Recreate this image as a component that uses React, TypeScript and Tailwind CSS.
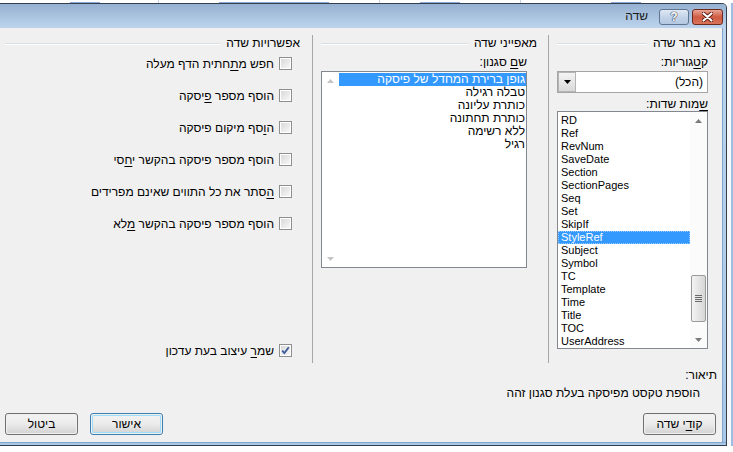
import React from "react";

const fields = [
  "RD",
  "Ref",
  "RevNum",
  "SaveDate",
  "Section",
  "SectionPages",
  "Seq",
  "Set",
  "SkipIf",
  "StyleRef",
  "Subject",
  "Symbol",
  "TC",
  "Template",
  "Time",
  "Title",
  "TOC",
  "UserAddress",
];

const styleNames = [
  "גופן ברירת המחדל של פיסקה",
  "טבלה רגילה",
  "כותרת עליונה",
  "כותרת תחתונה",
  "ללא רשימה",
  "רגיל",
];

// [before, access key, after]
const options: [string, string, string][] = [
  ["חפש מ", "ת", "חתית הדף מעלה"],
  ["הוסף מספר ", "פ", "יסקה"],
  ["ה", "ו", "סף מיקום פיסקה"],
  ["הוסף מספר פיסקה בהקשר י", "ח", "סי"],
  ["", "ה", "סתר את כל התווים שאינם מפרידים"],
  ["הוסף מספר פיסקה בהקשר ", "מ", "לא"],
];

function Key({ children }: { children: React.ReactNode }) {
  return <span className="underline underline-offset-[2px]">{children}</span>;
}

function GroupHeader({ title, className }: { title: string; className: string }) {
  return (
    <div className={`flex items-center h-4 leading-4 ${className}`}>
      <span className="whitespace-nowrap">{title}</span>
      <div className="flex-1 ms-[6px] mt-[2px] h-[2px] border-t border-[#d5dfe5] border-b-white border-b" />
    </div>
  );
}

function Arrow({ up, color }: { up?: boolean; color: string }) {
  return (
    <svg width="7" height="4" viewBox="0 0 7 4">
      <path d={up ? "M0 4 L3.5 0 L7 4 Z" : "M0 0 L7 0 L3.5 4 Z"} fill={color} />
    </svg>
  );
}

function CheckBox({ checked }: { checked?: boolean }) {
  return (
    <span className="w-[13px] h-[13px] shrink-0 border border-[#8e8f8f] bg-white p-px flex">
      <span className="flex-1 bg-gradient-to-br from-[#d9d9d9] to-[#f7f7f7] flex items-center justify-center">
        {checked && (
          <svg width="9" height="9" viewBox="0 0 9 9">
            <path d="M1.2 4.6 L3.4 7 L7.8 1.2" fill="none" stroke="#3d5a98" strokeWidth="1.8" />
          </svg>
        )}
      </span>
    </span>
  );
}

function Button({ children, primary, className = "" }: { children: React.ReactNode; primary?: boolean; className?: string }) {
  return (
    <div
      className={`h-[22px] rounded-[3px] border p-px ${primary ? "border-[#3c7fb1]" : "border-[#707070]"} ${className}`}
    >
      <div
        className={`h-full rounded-[2px] flex items-center justify-center bg-gradient-to-b from-[#f2f2f2] via-[#ebebeb] via-50% to-[#d4d4d4] ${primary ? "ring-1 ring-inset ring-[#9fdcf8]" : ""}`}
      >
        {children}
      </div>
    </div>
  );
}

export default function App() {
  return (
    <div className="w-[733px] h-[452px] overflow-hidden bg-white flex flex-col font-['Liberation_Sans',sans-serif] text-[12px] text-black">
      {/* document behind the dialog */}
      <div className="h-[3px] flex items-end">
        <div className="ml-[70px] w-[30px] h-px bg-[#8aa7d8]" />
        <div className="ml-[58px] w-px h-[3px] bg-[#c8d3e0]" />
        <div className="ml-[60px] w-[110px] h-px bg-[#8aa7d8]" />
        <div className="ml-[50px] w-px h-[3px] bg-[#c8d3e0]" />
        <div className="ml-[40px] w-[40px] h-px bg-[#8aa7d8]" />
        <div className="ml-[60px] w-px h-[3px] bg-[#c8d3e0]" />
        <div className="ml-[90px] w-[30px] h-px bg-[#8aa7d8]" />
      </div>

      <div className="flex h-[443px]">
        {/* dialog window */}
        <div className="w-[727px] flex flex-col border-t border-r border-b border-[#34404f] rounded-tr-[5px] bg-[#b4cde8]">
          {/* title bar */}
          <div dir="rtl" className="h-[24px] flex items-start pe-0 ps-0 bg-gradient-to-b from-[#96b1d1] to-[#bcd4ed] rounded-tr-[4px]">
            <div className="w-[31px] h-[16px] mt-[5px] mr-[3px] rounded-[3px] border border-[#6e2a1f] bg-gradient-to-b from-[#e8a596] via-[#cf5a42] via-50% to-[#d9735a] flex items-center justify-center">
              <svg width="11" height="10" viewBox="0 0 11 10">
                <path d="M1.5 1.5 L9.5 8.5 M9.5 1.5 L1.5 8.5" stroke="#5a1a10" strokeWidth="4" strokeLinecap="round" />
                <path d="M1.5 1.5 L9.5 8.5 M9.5 1.5 L1.5 8.5" stroke="#ffffff" strokeWidth="2.2" strokeLinecap="round" />
              </svg>
            </div>
            <div className="w-[30px] h-[16px] mt-[5px] mr-[3px] rounded-[3px] border border-[#5f7591] bg-gradient-to-b from-[#e2eaf5] via-[#c3d3e8] via-50% to-[#b5c8e2] flex items-center justify-center">
              <span className="text-[12px] leading-none font-bold text-white [text-shadow:0_0_1px_#2b3a52,0_0_1px_#2b3a52,0_0_1px_#2b3a52]">?</span>
            </div>
            <span className="mr-[11px] mt-[4px] leading-[16px] text-[12px] text-[#1a1a1a]">שדה</span>
          </div>

          <div className="flex h-[414px]">
            {/* client area */}
            <div dir="rtl" className="w-[722px] bg-[#f0f0f0] flex flex-col">
              <div className="mt-[7px] h-[328px] flex">
                {/* select field */}
                <div className="w-[174px] border-l border-[#a7a7a7] flex flex-col">
                  <GroupHeader title="נא בחר שדה" className="pr-[6px] pl-[8px]" />
                  <div className="mt-[4px] pr-[14px] leading-[14px] h-[14px]">
                    ק<Key>ט</Key>גוריות:
                  </div>
                  <div className="mt-[2px] ml-[8px] mr-[14px] h-[22px] border border-[#a5a5a5] bg-white flex items-center">
                    <span className="flex-1 pr-[4px] leading-[14px]">(הכל)</span>
                    <div className="w-[18px] h-[20px] border border-[#b5b5b5] bg-gradient-to-b from-[#f4f4f4] to-[#d9d9d9] flex items-center justify-center">
                      <Arrow color="#000000" />
                    </div>
                  </div>
                  <div className="mt-[5px] pr-[14px] leading-[13px] h-[13px]">
                    <Key>ש</Key>מות שדות:
                  </div>
                  <div dir="ltr" className="ml-[8px] mr-[14px] h-[238px] border border-[#828790] bg-white flex">
                    <div className="flex-1 pt-[2px] text-[11px]">
                      {fields.map((f) => (
                        <div
                          key={f}
                          className={`h-[13px] leading-[13px] pl-[3px] ${f === "StyleRef" ? "bg-[#3399ff] text-white outline-1 outline-dotted outline-[#9ccbff] -outline-offset-1" : ""}`}
                        >
                          {f}
                        </div>
                      ))}
                    </div>
                    <div className="w-[17px] flex flex-col bg-[#fbfbfb]">
                      <div className="h-[17px] flex items-center justify-center">
                        <Arrow up color="#7a7a7a" />
                      </div>
                      <div className="flex-1 pt-[146px] px-px">
                        <div className="h-[47px] rounded-[2px] border border-[#9a9a9a] bg-gradient-to-r from-[#f3f3f3] to-[#d6d6d6] flex flex-col items-center justify-center gap-px">
                          <div className="w-[7px] h-px bg-[#6a6a6a]" />
                          <div className="w-[7px] h-px bg-[#6a6a6a]" />
                          <div className="w-[7px] h-px bg-[#6a6a6a]" />
                          <div className="w-[7px] h-px bg-[#6a6a6a]" />
                        </div>
                      </div>
                      <div className="h-[17px] flex items-center justify-center">
                        <Arrow color="#7a7a7a" />
                      </div>
                    </div>
                  </div>
                </div>

                {/* field properties */}
                <div className="w-[236px] border-l border-[#a7a7a7] flex flex-col">
                  <GroupHeader title="מאפייני שדה" className="pr-[11px] pl-[8px]" />
                  <div className="mt-[4px] pr-[21px] leading-[14px] h-[14px]">
                    ש<Key>ם</Key> סגנון:
                  </div>
                  <div className="mt-[2px] ml-[8px] mr-[21px] h-[197px] border border-[#828790] bg-white flex">
                    <div className="flex-1 pt-px">
                      {styleNames.map((s, i) => (
                        <div
                          key={s}
                          className={`h-[13px] leading-[13px] pr-px whitespace-nowrap ${i === 0 ? "bg-[#3399ff] text-white" : ""}`}
                        >
                          {s}
                        </div>
                      ))}
                    </div>
                    <div className="w-[17px] flex flex-col justify-between">
                      <div className="h-[17px] flex items-center justify-center">
                        <Arrow up color="#c4c4c4" />
                      </div>
                      <div className="h-[17px] flex items-center justify-center">
                        <Arrow color="#c4c4c4" />
                      </div>
                    </div>
                  </div>
                </div>

                {/* field options */}
                <div className="flex-1 flex flex-col pb-[6px]">
                  <GroupHeader title="אפשרויות שדה" className="pr-[12px] pl-[5px]" />
                  <div className="mt-[6px] pr-[20px] flex flex-col gap-[19px]">
                    {options.map(([a, k, b]) => (
                      <div key={a + k + b} className="h-[13px] flex items-center gap-[5px]">
                        <CheckBox />
                        <span className="leading-[14px] whitespace-nowrap">
                          {a}
                          <Key>{k}</Key>
                          {b}
                        </span>
                      </div>
                    ))}
                  </div>
                  <div className="mt-auto pr-[20px] h-[13px] flex items-center gap-[5px]">
                    <CheckBox checked />
                    <span className="leading-[14px] whitespace-nowrap">
                      שמ<Key>ר</Key> עיצוב בעת עדכון
                    </span>
                  </div>
                </div>
              </div>

              {/* description */}
              <div className="mt-[5px] pr-[5px] leading-[14px] h-[14px]">תיאור:</div>
              <div className="mt-[4px] pr-[22px] leading-[14px] h-[14px]">הוספת טקסט מפיסקה בעלת סגנון זהה</div>

              {/* buttons */}
              <div className="mt-auto mb-[7px] pr-[6px] pl-[5px] flex">
                <Button className="w-[73px]">
                  קו<Key>ד</Key>י שדה
                </Button>
                <div className="flex-1" />
                <Button primary className="w-[73px]">
                  אישור
                </Button>
                <Button className="w-[73px] mr-[12px]">ביטול</Button>
              </div>
            </div>
            {/* right frame */}
            <div className="flex-1 bg-gradient-to-b from-[#bcd4ed] to-[#a9c7e6] border-l border-[#7fa6cf]" />
          </div>
          {/* bottom frame */}
          <div className="h-[3px] bg-[#a9c7e6] border-t border-[#7fa6cf]" />
        </div>

        {/* beyond the window */}
        <div className="flex-1 bg-[#f7f9fc] flex justify-end">
          <div className="w-[2px] bg-[#9fbde0]" />
        </div>
      </div>
      <div className="flex-1 bg-white" />
    </div>
  );
}
